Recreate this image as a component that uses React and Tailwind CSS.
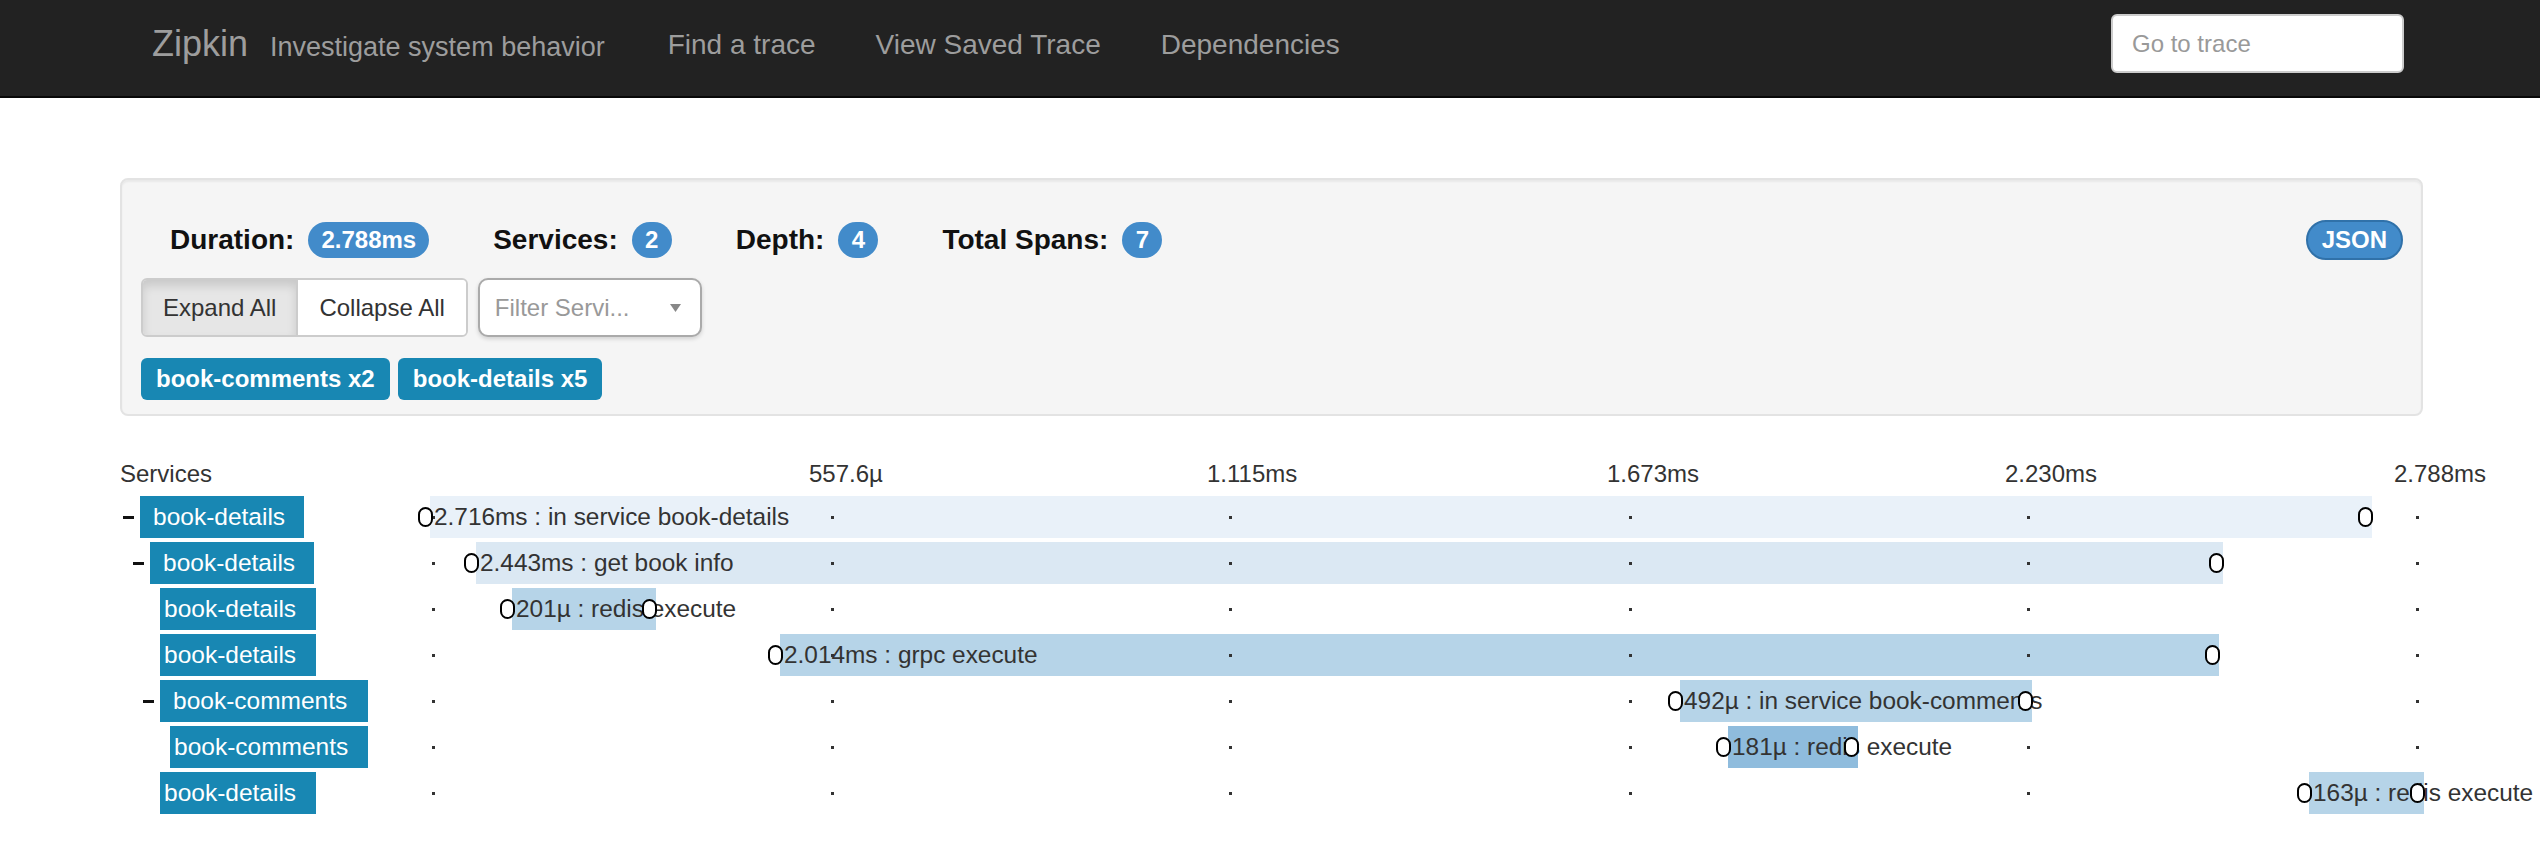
import React from "react";

const NAV_LINKS = ["Find a trace", "View Saved Trace", "Dependencies"];

const STATS = [
  ["Duration:", "2.788ms"],
  ["Services:", "2"],
  ["Depth:", "4"],
  ["Total Spans:", "7"],
];

// tick x positions, relative to the start of the timeline column
const TICKS = [0, 399, 797, 1197, 1595, 1984];
const TICK_LABELS = [null, "557.6µ", "1.115ms", "1.673ms", "2.230ms", "2.788ms"];

const ROWS = [
  { lead: "pl-[3px]", dash: true, box: "w-[164px] pl-[13px]", service: "book-details", left: -3, width: 1942, color: "bg-[#e9f1f9]", label: "2.716ms : in service book-details" },
  { lead: "pl-[13px]", dash: true, box: "w-[164px] pl-[13px]", service: "book-details", left: 43, width: 1747, color: "bg-[#dbe8f3]", label: "2.443ms : get book info" },
  { lead: "pl-[40px]", dash: false, box: "w-[156px] pl-[4px]", service: "book-details", left: 79, width: 144, color: "bg-[#b6d4e8]", label: "201µ : redis execute" },
  { lead: "pl-[40px]", dash: false, box: "w-[156px] pl-[4px]", service: "book-details", left: 347, width: 1439, color: "bg-[#b6d4e8]", label: "2.014ms : grpc execute" },
  { lead: "pl-[23px]", dash: true, box: "w-[208px] pl-[13px]", service: "book-comments", left: 1247, width: 352, color: "bg-[#b6d4e8]", label: "492µ : in service book-comments" },
  { lead: "pl-[50px]", dash: false, box: "w-[198px] pl-[4px]", service: "book-comments", left: 1295, width: 130, color: "bg-[#8fbcdd]", label: "181µ : redis execute" },
  { lead: "pl-[40px]", dash: false, box: "w-[156px] pl-[4px]", service: "book-details", left: 1876, width: 115, color: "bg-[#b6d4e8]", label: "163µ : redis execute" },
];

function Marker({ x }) {
  return (
    <div className="absolute top-1/2 -translate-y-1/2 w-[15px] h-[20px] rounded-full border-2 border-black bg-white"
      style={{ left: x }} />
  );
}

function SpanRow({ row }) {
  return (
    <div className="h-[42px] flex">
      {/* service column */}
      <div className={"w-[313px] shrink-0 flex items-center " + row.lead}>
        {row.dash && <div className="w-[11px] h-[3px] bg-[#111] mr-[6px]" />}
        <div className={"h-[42px] flex items-center bg-[#1887b3] text-white text-[24.5px] whitespace-nowrap " + row.box}>{row.service}</div>
      </div>
      {/* timeline */}
      <div className="relative flex-1 h-full">
        <div className={"absolute top-0 h-full " + row.color} style={{ left: row.left, width: row.width }} />
        {TICKS.map(t => (
          <div key={t} className="absolute top-[20px] w-[3px] h-[3px] bg-[#333]" style={{ left: t - 1 }} />
        ))}
        <div className="absolute top-0 h-full flex items-center whitespace-nowrap text-[24.4px] text-[#333]" style={{ left: row.left + 4 }}>
          {row.label}
        </div>
        <Marker x={row.left - 12} />
        <Marker x={row.left + row.width - 14} />
      </div>
    </div>
  );
}

export default function App() {
  return (
    <div className="min-h-[844px] bg-white overflow-hidden text-[#333]" style={{ fontFamily: '"Liberation Sans", Arial, sans-serif' }}>
      {/* Navbar */}
      <nav className="h-[98px] pb-[9px] bg-[#222] border-b-2 border-[#080808] flex items-center justify-between">
        <div className="flex items-baseline pl-[152px] text-[#9d9d9d]">
          <span className="text-[36px]">Zipkin</span>
          <span className="ml-[22px] text-[27px]">Investigate system behavior</span>
          <ul className="flex ml-[33px] -translate-y-[2px]">
            {NAV_LINKS.map(l => (
              <li key={l} className="px-[30px] text-[28px]">{l}</li>
            ))}
          </ul>
        </div>
        <input className="mr-[136px] w-[293px] h-[59px] rounded-[6px] bg-white border-2 border-[#ccc] px-[19px] text-[24px] text-[#555] placeholder:text-[#999] outline-none"
          placeholder="Go to trace" />
      </nav>

      <main className="pl-[120px] pr-[117px] pt-[80px]">
        {/* Trace summary */}
        <section className="rounded-[8px] border-2 border-[#e3e3e3] bg-[#f5f5f5] pt-[40px] pb-[14px] pl-[19px] pr-[18px] shadow-[inset_0_2px_2px_rgba(0,0,0,0.05)]">
          <div className="h-[40px] flex items-center justify-between">
            <ul className="flex items-center ml-[29px]">
              {STATS.map(([label, value], i) => (
                <li key={label} className={"flex items-center " + (i > 0 ? "ml-[64px]" : "")}>
                  <span className="text-[28px] font-bold text-[#111]">{label}</span>
                  <span className="ml-[14px] h-[36px] min-w-[40px] px-[13px] rounded-full bg-[#428bca] text-white text-[24px] font-bold flex items-center justify-center">{value}</span>
                </li>
              ))}
            </ul>
            <span className="h-[40px] px-[14px] rounded-full bg-[#428bca] border-2 border-[#3071a9] text-white text-[24px] font-bold flex items-center">JSON</span>
          </div>

          <div className="mt-[18px] flex items-center">
            <div className="flex h-[59px] rounded-[6px] border-2 border-[#ccc] overflow-hidden text-[24px] text-[#333]">
              <button className="px-[20px] bg-[#e6e6e6] border-r-2 border-[#ccc] shadow-[inset_0_6px_10px_rgba(0,0,0,0.125)]">Expand All</button>
              <button className="px-[21px] bg-white">Collapse All</button>
            </div>
            <div className="ml-[10px] w-[224px] h-[59px] rounded-[10px] border-2 border-[#aaa] bg-white shadow-[0_2px_4px_rgba(0,0,0,0.15)] flex items-center justify-between pl-[15px] pr-[19px]">
              <span className="text-[24px] text-[#999]">Filter Servi...</span>
              <svg width="11" height="8" viewBox="0 0 11 8"><polygon points="0,0 11,0 5.5,8" fill="#888" /></svg>
            </div>
          </div>

          <div className="mt-[21px] flex gap-[8px]">
            {["book-comments x2", "book-details x5"].map(t => (
              <span key={t} className="h-[42px] px-[15px] rounded-[6px] bg-[#1887b3] text-white text-[24px] font-bold flex items-center">{t}</span>
            ))}
          </div>
        </section>

        {/* Timeline */}
        <div className="mt-[36px]">
          <div className="h-[44px] flex">
            <div className="w-[313px] shrink-0 flex items-center text-[24px] text-[#333]">Services</div>
            <div className="relative flex-1 h-full">
              {TICKS.map((t, i) => TICK_LABELS[i] && (
                <div key={t} className="absolute top-0 h-full flex items-center text-[24px] text-[#333] whitespace-nowrap" style={{ left: t - 23 }}>
                  {TICK_LABELS[i]}
                </div>
              ))}
            </div>
          </div>
          <div className="flex flex-col gap-[4px]">
            {ROWS.map((r, i) => <SpanRow key={i} row={r} />)}
          </div>
        </div>
      </main>
    </div>
  );
}
